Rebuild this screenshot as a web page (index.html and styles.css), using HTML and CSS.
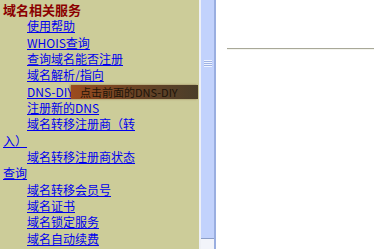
FILE: index.html
```html
<!DOCTYPE html>
<html lang="zh-CN">
<head>
    <meta charset="UTF-8">
    <title>域名相关服务</title>
    <link rel="stylesheet" href="styles.css">
</head>
<body>
    <div class="frame">
        <div class="sidebar">
            <div class="menu">
                <div class="title">域名相关服务</div>
                <div class="item"><a href="#">使用帮助</a></div>
                <div class="item"><a href="#">WHOIS查询</a></div>
                <div class="item"><a href="#">查询域名能否注册</a></div>
                <div class="item"><a href="#">域名解析/指向</a></div>
                <div class="item tip-anchor">
                    <a href="#">DNS-DIY</a>
                    <span class="tooltip">点击前面的DNS-DIY</span>
                </div>
                <div class="item"><a href="#">注册新的DNS</a></div>
                <div class="item"><a href="#">域名转移注册商（转入）</a></div>
                <div class="item"><a href="#">域名转移注册商状态查询</a></div>
                <div class="item"><a href="#">域名转移会员号</a></div>
                <div class="item"><a href="#">域名证书</a></div>
                <div class="item"><a href="#">域名锁定服务</a></div>
                <div class="item"><a href="#">域名自动续费</a></div>
            </div>
        </div>

        <!-- splitter drawn like the old scrollbar -->
        <div class="splitter">
            <div class="gap"></div>
            <div class="bar">
                <div class="thumb">
                    <div class="grip"></div>
                </div>
                <div class="track"></div>
            </div>
        </div>

        <div class="main">
            <div class="rule"></div>
        </div>
    </div>
</body>
</html>
```

FILE: styles.css
```css
html, body {
    margin: 0;
    height: 100%;
    overflow: hidden;
}

body {
    background-color: #ffffff;
    font-family: "Noto Sans CJK SC", "Noto Sans", sans-serif;
    font-size: 12px;
}

.frame {
    display: flex;
    height: 249px;
}

.sidebar {
    width: 199px;
    flex-shrink: 0;
    background-color: #cccc99;
}

.menu {
    width: 140px;
    padding: 2px 0 0 3px;
    line-height: 16.35px;
}

.title {
    color: #8b0000;
    font-weight: bold;
    font-size: 13px;
}

.item {
    text-indent: 24px;
}

.item a {
    color: #0000ee;
    text-decoration: underline;
}

.tip-anchor {
    position: relative;
}

.tooltip {
    position: absolute;
    left: 68px;
    top: 1px;
    width: 118px;
    height: 14px;
    padding-left: 9px;
    text-indent: 0;
    white-space: nowrap;
    font-size: 11px;
    line-height: 14px;
    color: #1e140a;
    background: linear-gradient(to right, #9c4c1e, #6e4424 45%, #4a3e2a);
    box-shadow: -1px 0 2px rgba(90, 40, 10, 0.5);
}

.splitter {
    display: flex;
    flex-shrink: 0;
    height: 100%;
}

.gap {
    width: 2px;
    background-color: #eef0f6;
}

.bar {
    width: 13px;
    display: flex;
    flex-direction: column;
    border-right: 2px solid #9aaee0;
}

.thumb {
    height: 239px;
    background-color: #c2d2fc;
    border-bottom: 1px solid #8c9ec8;
    box-sizing: border-box;
    display: flex;
    justify-content: center;
    padding-top: 60px;
}

.grip {
    width: 8px;
    height: 7px;
    background: repeating-linear-gradient(to bottom, #eef3ff 0, #eef3ff 1px, #9fb2e4 1px, #9fb2e4 2px);
}

.track {
    flex: 1;
    background-color: #f2f4fa;
}

.main {
    flex: 1;
    padding-top: 48px;
    padding-left: 11px;
}

.rule {
    height: 1px;
    border-top: 1px solid #a8a898;
    border-bottom: 1px solid #f4f4ee;
    box-sizing: border-box;
    height: 2px;
}
```
